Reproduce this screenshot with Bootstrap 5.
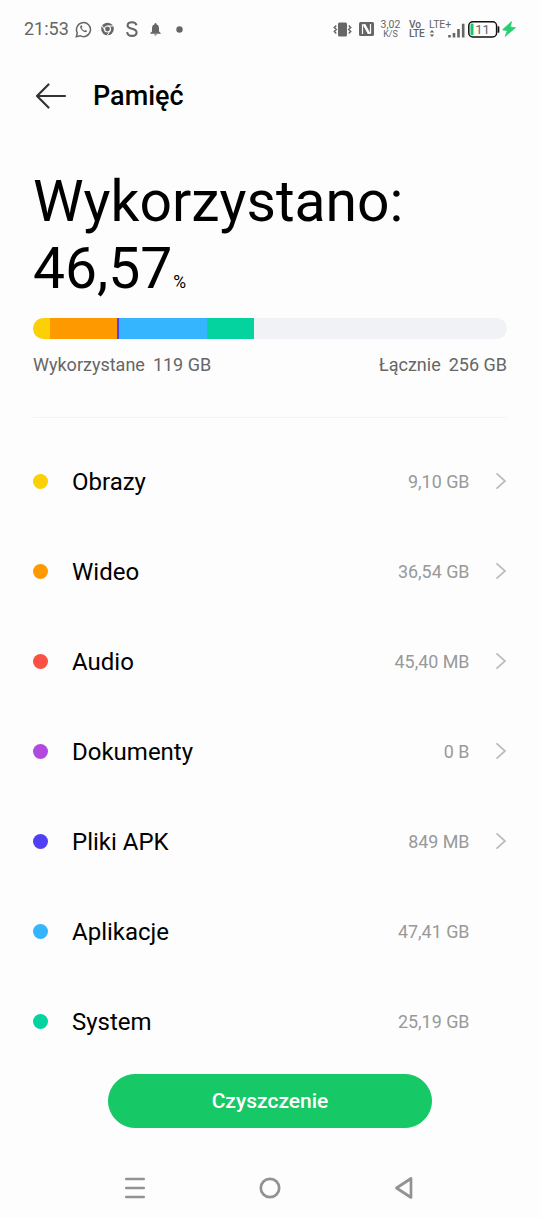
<!DOCTYPE html>
<html lang="pl">
<head>
<meta charset="utf-8">
<meta name="viewport" content="width=device-width, initial-scale=1">
<title>Pamięć</title>
<link href="https://cdn.jsdelivr.net/npm/bootstrap@5.3.0/dist/css/bootstrap.min.css" rel="stylesheet">
<style>
  body { background: #fdfdfd; color: #000; font-family: Roboto, "Noto Sans", sans-serif; }
  .phone { width: 540px; height: 1218px; overflow: hidden; }
  .status-bar { height: 58px; padding-left: 24px; padding-right: 24px; color: #666; }
  .status-bar svg { display: block; flex: none; }
  .clock { font-size: 18px; line-height: 20px; width: 45px; }
  .tiny { font-weight: 500; line-height: 10px; white-space: nowrap; }
  .app-bar { height: 76px; padding: 0 33px; }
  .app-title { font-size: 27px; font-weight: 500; line-height: 32px; margin: 0 0 0 26px; }
  .usage { padding: 34px 33px 0 33px; height: 283px; }
  .usage-title { font-size: 57px; font-weight: 400; line-height: 67px; height: 134px; margin: 0; }
  .percent-sign { font-size: 17.500px; margin-left: 1px; }
  .storage-bar { height: 21px; margin-top: 16px; border-radius: 11px; background: #f0f2f5; }
  .totals { font-size: 18px; line-height: 24px; margin-top: 14px; color: #666; }
  .totals b { font-weight: 400; margin-left: 8px; }
  .divider { height: 1px; background: #f3f3f3; margin-top: 40px; }
  .storage-list { padding-top: 19px; }
  .storage-row { height: 90px; padding: 0 33px; border: 0; background: transparent; color: #000; }
  .swatch { width: 15px; height: 15px; border-radius: 50%; margin-right: 24px; }
  .row-label { font-size: 24px; line-height: 32px; padding-top: 1px; }
  .row-value { font-size: 17.900px; line-height: 24px; padding-top: 1px; color: #999; margin-right: 25.500px; }
  .row-arrow { width: 12px; height: 18px; }
  .c-img { background: #fbd005; } .c-vid { background: #ff9900; } .c-aud { background: #fa5144; }
  .c-doc { background: #b249df; } .c-apk { background: #5040f4; } .c-app { background: #35b5fd; } .c-sys { background: #04d3a0; }
  .clean-btn { width: 324px; height: 54px; margin-top: 8px; font-size: 21px; font-weight: 500; line-height: 24px;
    --bs-btn-bg: #16c866; --bs-btn-color: #fff; --bs-btn-border-color: #16c866; --bs-btn-hover-bg: #12b65b; --bs-btn-hover-color: #fff; }
  .nav-keys { height: 60px; margin-top: 30px; padding: 0 124px; }
</style>
</head>
<body>
<div class="phone d-flex flex-column mx-auto">
  <div class="status-bar d-flex align-items-center flex-shrink-0">
    <span class="clock">21:53</span>
    <svg style="margin-left:6px" width="17" height="17" viewBox="0 0 17 17" fill="none" stroke="#666" stroke-width="1.5"><path d="M1.3 15.7l1-3.8A7 7 0 1 1 5 14.7z"/><path d="M5.8 4.500c-1.200 1-.8 2.800 1.100 4.800 2 2 4 2.500 4.900 1.300.5-.7.2-1.100-1.300-1.700l-.9.9C8.200 9.300 7.200 8.300 6.600 7.100l.8-1C6.900 4.500 6.500 4 5.800 4.500z" fill="#666" stroke="none"/></svg>
    <svg style="margin-left:9px" width="13" height="14" viewBox="0 0 13 14"><circle cx="6.500" cy="7" r="6.300" fill="#666"/><circle cx="6.500" cy="7" r="3" fill="#666" stroke="#fdfdfd" stroke-width="1.200"/><path d="M6.500 4h5.500M3.900 8.500L1.200 3.800M9.100 8.500l-2.800 4.800" stroke="#fdfdfd" stroke-width="1"/></svg>
    <svg style="margin-left:12px" width="12" height="16" viewBox="0 0 12 16" fill="none" stroke="#666" stroke-width="2.100"><path d="M10.500 4.300C10 2 8.500 1.200 6 1.200S1.600 2.400 1.600 4.500C1.600 6.700 3.500 7.200 6 7.800s4.600 1.300 4.600 3.700c0 2.200-1.900 3.400-4.500 3.400S1.400 13.700 1.100 11.100"/></svg>
    <svg style="margin-left:12px" width="11" height="13" viewBox="0 0 11 13" fill="#666"><path d="M5.500 0q1 0 1 1.200Q9 2 9 5v3.500L10.700 10v.7H.3V10L2 8.500V5q0-3 2.500-3.800Q4.500 0 5.500 0zM4.200 11.300h2.600q-.3 1.300-1.300 1.300t-1.300-1.300z"/></svg>
    <svg style="margin-left:15px" width="7" height="7" viewBox="0 0 7 7"><circle cx="3.500" cy="3.500" r="3.200" fill="#666"/></svg>

    <svg class="ms-auto" width="19" height="15" viewBox="0 0 19 15"><rect x="5" y=".5" width="9" height="14" rx="1.500" fill="#666"/><path d="M3.300 3.500L1.300 5.500l2 2-2 2 2 2M15.700 3.500l2 2-2 2 2 2-2 2" stroke="#666" stroke-width="1.500" fill="none"/></svg>
    <svg style="margin-left:7px" width="15" height="14" viewBox="0 0 15 14"><rect width="15" height="14" rx="1.500" fill="#666"/><path d="M3.500 12V2.800h2.300l4.500 8.200M4.700 3l4.500 8.200h2.300V2" stroke="#fdfdfd" stroke-width="1.200" fill="none"/><path d="M4.800 2.200h1.500l4.200 7.800V12H9L4.800 4.200z" fill="#fdfdfd"/></svg>
    <div class="tiny text-center" style="width:21px;margin-left:6px"><div style="font-size:10.500px;font-weight:400">3,02</div><div style="font-size:9px;line-height:9px;font-weight:400">K/S</div></div>
    <div class="tiny" style="width:16px;margin-left:8px;font-size:10.200px;line-height:9px;letter-spacing:-.2px">Vo<br>LTE</div>
    <div class="tiny" style="width:22px;margin-left:4px;height:18px;font-size:10.500px;letter-spacing:-.1px;font-weight:400">LTE+<svg width="6" height="7" viewBox="0 0 6 7"><path d="M3 0l2.300 2.600H.7zM3 7l2.300-2.600H.7z" fill="#666"/></svg></div>
    <svg style="margin-left:-3px;margin-top:2px" width="17" height="15" viewBox="0 0 17 15" stroke="#666" stroke-width="2.600"><path d="M1.500 14.500v-2.500M6 14.500V10M10.500 14.500V6M15.200 14.500V.8"/></svg>
    <svg style="margin-left:3px" width="32" height="17" viewBox="0 0 32 17"><rect x=".8" y=".8" width="27.800" height="15.200" rx="4" fill="none" stroke="#111" stroke-width="1.500"/><path d="M30.500 6v5" stroke="#111" stroke-width="1.700" stroke-linecap="round"/><rect x="2.500" y="2.500" width="3" height="11.800" rx="1" fill="#20c468"/><text x="14.500" y="13" text-anchor="middle" font-family="Roboto" font-size="13" fill="#666">11</text></svg>
    <svg style="margin-left:2px" width="14" height="16" viewBox="0 0 14 16"><path d="M9.500.5L.5 8.800l4.800.9L3 15.500 13.500 6.700 8.500 6z" fill="#27cf70" stroke="#27cf70" stroke-width=".7"/></svg>
  </div>

  <header class="app-bar d-flex align-items-center flex-shrink-0">
    <svg width="34" height="28" viewBox="0 0 34 28" fill="none" stroke="#333" stroke-width="2.200" stroke-linecap="round" stroke-linejoin="round"><path d="M15.500 2.500L4 14l11.500 11.500M4 14h28"/></svg>
    <h1 class="app-title">Pamięć</h1>
  </header>

  <section class="usage flex-shrink-0">
    <h2 class="usage-title">Wykorzystano:<br>46,57<span class="percent-sign">%</span></h2>
    <div class="storage-bar d-flex overflow-hidden">
      <div class="c-img" style="width:3.550%"></div>
      <div class="c-vid" style="width:14.270%"></div>
      <div class="c-apk" style="width:.330%"></div>
      <div class="c-app" style="width:18.550%"></div>
      <div class="c-sys" style="width:9.870%"></div>
    </div>
    <div class="totals d-flex justify-content-between"><span>Wykorzystane<b>119 GB</b></span><span>Łącznie<b>256 GB</b></span></div>
    <div class="divider"></div>
  </section>

  <div class="storage-list list-group list-group-flush flex-shrink-0">
    <div class="storage-row list-group-item d-flex align-items-center"><span class="swatch c-img"></span><span class="row-label">Obrazy</span><span class="row-value ms-auto">9,10 GB</span><svg class="row-arrow" viewBox="0 0 12 18"><path d="M1.500 1.300L10 9l-8.500 7.700" fill="none" stroke="#bbb" stroke-width="1.700"/></svg></div>
    <div class="storage-row list-group-item d-flex align-items-center"><span class="swatch c-vid"></span><span class="row-label">Wideo</span><span class="row-value ms-auto">36,54 GB</span><svg class="row-arrow" viewBox="0 0 12 18"><path d="M1.500 1.300L10 9l-8.500 7.700" fill="none" stroke="#bbb" stroke-width="1.700"/></svg></div>
    <div class="storage-row list-group-item d-flex align-items-center"><span class="swatch c-aud"></span><span class="row-label">Audio</span><span class="row-value ms-auto">45,40 MB</span><svg class="row-arrow" viewBox="0 0 12 18"><path d="M1.500 1.300L10 9l-8.500 7.700" fill="none" stroke="#bbb" stroke-width="1.700"/></svg></div>
    <div class="storage-row list-group-item d-flex align-items-center"><span class="swatch c-doc"></span><span class="row-label">Dokumenty</span><span class="row-value ms-auto">0 B</span><svg class="row-arrow" viewBox="0 0 12 18"><path d="M1.500 1.300L10 9l-8.500 7.700" fill="none" stroke="#bbb" stroke-width="1.700"/></svg></div>
    <div class="storage-row list-group-item d-flex align-items-center"><span class="swatch c-apk"></span><span class="row-label">Pliki APK</span><span class="row-value ms-auto">849 MB</span><svg class="row-arrow" viewBox="0 0 12 18"><path d="M1.500 1.300L10 9l-8.500 7.700" fill="none" stroke="#bbb" stroke-width="1.700"/></svg></div>
    <div class="storage-row list-group-item d-flex align-items-center"><span class="swatch c-app"></span><span class="row-label">Aplikacje</span><span class="row-value ms-auto">47,41 GB</span><span class="row-arrow"></span></div>
    <div class="storage-row list-group-item d-flex align-items-center"><span class="swatch c-sys"></span><span class="row-label">System</span><span class="row-value ms-auto">25,19 GB</span><span class="row-arrow"></span></div>
  </div>

  <button type="button" class="clean-btn btn rounded-pill align-self-center flex-shrink-0">Czyszczenie</button>

  <nav class="nav-keys d-flex align-items-center justify-content-between flex-shrink-0" aria-label="Nawigacja">
    <svg width="22" height="24" viewBox="0 0 22 24" stroke="#929292" stroke-width="2.500" stroke-linecap="round"><path d="M2.200 3h17.600M2.200 12h17.600M2.200 21h17.600"/></svg>
    <svg width="24" height="24" viewBox="0 0 24 24"><circle cx="12" cy="12" r="9.200" fill="none" stroke="#929292" stroke-width="2.700"/></svg>
    <svg width="22" height="24" viewBox="0 0 22 24"><path d="M17 2.500v19L2.500 12z" fill="none" stroke="#929292" stroke-width="2.700" stroke-linejoin="round"/></svg>
  </nav>
</div>
<script src="https://cdn.jsdelivr.net/npm/bootstrap@5.3.0/dist/js/bootstrap.bundle.min.js"></script>
</body>
</html>
